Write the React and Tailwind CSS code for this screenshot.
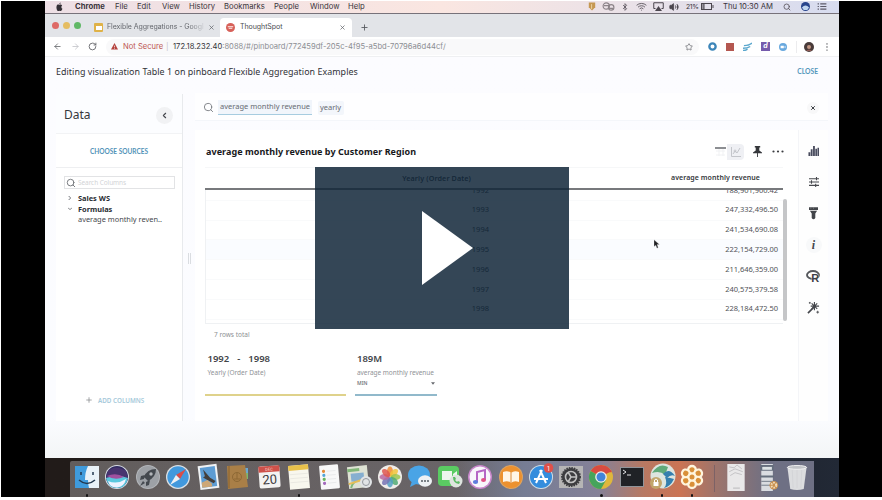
import React from "react";
import { Search, ChevronLeft, Bluetooth, Wifi, Airplay, Volume2, RotateCw, ArrowLeft, ArrowRight, Star, X, Plus } from "lucide-react";

const menus = [
  ["Chrome", "w-[40px] font-bold"],
  ["File", "w-[22px]"],
  ["Edit", "w-[25px]"],
  ["View", "w-[27px]"],
  ["History", "w-[35px]"],
  ["Bookmarks", "w-[50px]"],
  ["People", "w-[36px]"],
  ["Window", "w-[38px]"],
  ["Help", "w-[30px]"],
];

const rows = [
  ["1992", "188,901,900.42"],
  ["1993", "247,332,496.50"],
  ["1994", "241,534,690.08"],
  ["1995", "222,154,729.00"],
  ["1996", "211,646,359.00"],
  ["1997", "240,575,379.58"],
  ["1998", "228,184,472.50"],
];

function MenuBar() {
  return (
    <div className="flex h-[13px] shrink-0 items-center border-b border-[#77727a] bg-linear-to-r from-[#eddfe5] via-[#fae6e1] to-[#d7dcef] text-[7.700px] text-[#39343b]">
      <svg viewBox="0 0 24 24" className="mb-[2px] ml-[11px] mr-[12px] h-[9px] w-[7px] shrink-0" preserveAspectRatio="none" fill="#332f35">
        <path d="M16 1c0 3-2 5-4.500 5C11.500 3 13.500 1.500 16 1zM21 9c-4 2-3 7 1 9-1 3-3.500 6-5.500 6s-2.500-1-4.500-1-2.500 1-4.500 1C4 24 0 16 2 11c2-5 6-5 9.500-3C15 6 19 6.500 21 9z" />
      </svg>
      {menus.map(([t, c]) => (
        <span key={t} className={"shrink-0 whitespace-nowrap " + c}>{t}</span>
      ))}
      <div className="ml-auto flex shrink-0 items-center">
        <svg viewBox="0 0 10 10" className="mr-[6px] h-[9px] w-[8px]"><path d="M1 0h8v6L5 10 1 6z" fill="#c69852" /><path d="M4.500 2v6" stroke="#f4e0b8" /></svg>
        <svg viewBox="0 0 14 10" className="mr-[6px] h-[9px] w-[13px]" fill="none" stroke="#8c8489" strokeWidth="1.300"><circle cx="4.500" cy="4.500" r="3.500" /><circle cx="10" cy="6" r="3" /><path d="M2 4h6M6 7h6" /></svg>
        <Bluetooth className="mr-[7px] h-[10px] w-[8px]" color="#5c565e" strokeWidth={2.5} />
        <Wifi className="mr-[6px] h-[11px] w-[11px]" color="#5c565e" strokeWidth={2} />
        <svg viewBox="0 0 22 18" className="mr-[5px] h-[9px] w-[11px]"><path d="M5 13H1.500V1.500h19V13H17" fill="none" stroke="#4b464e" strokeWidth="2" /><path d="M11 8l7 10H4z" fill="#4b464e" /></svg>
        <Volume2 className="mr-[7px] h-[10px] w-[10px]" color="#4b464e" fill="#4b464e" strokeWidth={2} />
        <span className="w-[15px] text-[6.800px] tracking-[-0.3px]">21%</span>
        <svg viewBox="0 0 13 7" className="mr-[9px] h-[7px] w-[13px]" fill="none" stroke="#4b464e"><rect x="0.500" y="0.500" width="10" height="6" /><path d="M2 1v5M3 1v5" /><path d="M12 2v3" /></svg>
        <span className="w-[60px] whitespace-nowrap text-[7.700px] tracking-[-0.050px]">Thu 10:30 AM</span>
        <Search className="mr-[10px] h-[8px] w-[8px]" color="#5c565e" strokeWidth={2.5} />
        <svg viewBox="0 0 10 10" className="mr-[7px] h-[9px] w-[9px]"><circle cx="5" cy="5" r="5" fill="#28458c" /><path d="M1 6q4-4 8 0l-2 3H3z" fill="#bfd5ef" /></svg>
        <svg viewBox="0 0 10 8" className="mr-[12px] h-[7px] w-[10px]" stroke="#5c5b69" strokeWidth="1.300"><path d="M0 1h1.500M3 1h7M0 4h1.500M3 4h7M0 7h1.500M3 7h7" /></svg>
      </div>
    </div>
  );
}

function TabStrip() {
  return (
    <div className="flex h-[23px] shrink-0 items-end bg-[#e2e4e8]">
      <div className="flex h-[23px] w-[49px] shrink-0 items-center gap-[4px] pl-[7px]">
        <i className="size-[7px] rounded-full bg-[#de6a67]" />
        <i className="size-[7px] rounded-full bg-[#e5bd62]" />
        <i className="size-[7px] rounded-full bg-[#60b866]" />
      </div>
      <div className="flex h-[19px] w-[126px] shrink-0 items-center text-[7px] text-[#62656a]">
        <span className="flex size-[9px] shrink-0 items-center justify-center rounded-[1px] bg-[#dfb248]"><i className="h-[4px] w-[6px] bg-white" /></span>
        <span className="ml-[4px] w-[97px] overflow-hidden whitespace-nowrap bg-linear-to-r from-[#5d6066] from-85% to-[#d2d4d8] bg-clip-text tracking-[-0.060px] text-transparent">Flexible Aggregations - Google</span>
        <X className="ml-[4px] size-[7px] shrink-0" color="#62656a" strokeWidth={2.5} />
      </div>
      <div className="flex h-[19px] w-[132px] shrink-0 items-center rounded-t-[4px] bg-white pl-[6px] text-[7px] text-[#4a4c50]">
        <svg viewBox="0 0 10 10" className="size-[9px]"><circle cx="5" cy="5" r="5" fill="#d76159" /><path d="M2 4h6M3 6h4" stroke="#f5cfca" strokeWidth="1.200" /></svg>
        <span className="ml-[5px] tracking-[-0.050px]">ThoughtSpot</span>
        <X className="ml-auto mr-[6px] size-[7px]" color="#62656a" strokeWidth={2.500} />
      </div>
      <Plus className="mb-[5px] ml-[8px] size-[9px]" color="#55585d" strokeWidth={2.300} />
    </div>
  );
}

function Toolbar() {
  return (
    <div className="flex h-[20px] shrink-0 items-center border-b border-[#eff0f2] bg-white pl-[8px] text-[7.600px]">
      <ArrowLeft className="size-[9px]" color="#66686c" strokeWidth={2.200} />
      <ArrowRight className="ml-[9px] size-[9px]" color="#c2c4c8" strokeWidth={2.200} />
      <RotateCw className="ml-[8px] size-[9px]" color="#66686c" strokeWidth={2.400} />
      <div className="ml-[9px] flex h-[16px] w-[593px] shrink-0 items-center rounded-full bg-[#f9f9fa] pl-[5px]">
        <svg viewBox="0 0 8 8" className="size-[7px]"><path d="M4 0l4 7.500H0z" fill="#b4413c" /><path d="M4 3v2M4 5.700v.8" stroke="#fff" strokeWidth=".8" /></svg>
        <span className="ml-[5px] w-[43px] whitespace-nowrap text-[#bd5752]">Not Secure</span>
        <span className="w-[7px] text-[#c4c4c8]">|</span>
        <span className="whitespace-nowrap text-[#333438]">172.18.232.40</span>
        <span className="whitespace-nowrap text-[#8c8e93]">:8088/#/pinboard/772459df-205c-4f95-a5bd-70796a6d44cf/</span>
        <Star className="ml-auto mr-[6px] size-[8px] shrink-0" color="#5c5e63" strokeWidth={2} />
      </div>
      <div className="ml-[9px] flex items-center">
        <svg viewBox="0 0 10 10" className="size-[9px]"><circle cx="5" cy="5" r="3.500" fill="#fff" stroke="#3d86b9" strokeWidth="2.600" /></svg>
        <i className="ml-[9px] size-[8px] bg-[#b45750]" />
        <svg viewBox="0 0 10 10" className="ml-[9px] size-[9px]" fill="none" stroke="#5aa7cd" strokeWidth="1.600"><path d="M1 4q6 0 9-3M0 7q5 0 8-2M0 9.500q3 0 5-1.500" /></svg>
        <span className="ml-[9px] flex size-[9px] items-center justify-center bg-[#755bac] text-[7px] font-bold italic text-white">d</span>
        <svg viewBox="0 0 10 10" className="ml-[9px] size-[8px]"><circle cx="5" cy="5" r="5" fill="#68a8de" /><path d="M2 3.500h4v3H2zM6.500 5L8 3.500v3z" fill="#fff" /></svg>
        <i className="ml-[9px] h-[12px] w-px bg-[#ececee]" />
        <svg viewBox="0 0 10 10" className="ml-[7px] size-[10px]"><circle cx="5" cy="5" r="5" fill="#493b3a" /><circle cx="5" cy="5" r="2" fill="#c29784" /><path d="M2 9q3-3 6 0" fill="#915b55" /></svg>
        <svg viewBox="0 0 2 9" className="ml-[12px] h-[8px] w-[2px]" fill="#4d4f53"><circle cx="1" cy="1" r="0.800" /><circle cx="1" cy="4.500" r="0.800" /><circle cx="1" cy="8" r="0.800" /></svg>
      </div>
    </div>
  );
}

function Sidebar() {
  return (
    <aside className="flex h-[327px] w-[127px] shrink-0 flex-col border-r border-[#e8eaed] bg-white">
      <div className="flex h-[40px] shrink-0 items-center justify-between border-b border-[#f2f3f5] bg-[#fcfdff] pl-[8px] pr-[9px] pt-[3px]">
        <span className="text-[12px] text-[#36383c]">Data</span>
        <span className="flex size-[17px] items-center justify-center rounded-full bg-[#f1f2f4]"><ChevronLeft className="size-[9px]" color="#44474d" strokeWidth={3} /></span>
      </div>
      <div className="flex h-[34px] shrink-0 items-center justify-center border-b border-[#eeeff1] pt-[2px] font-[Lato] text-[6.500px] font-bold text-[#5293b8]">CHOOSE SOURCES</div>
      <div className="ml-[8px] mt-[8px] flex h-[13px] w-[111px] shrink-0 items-center border border-[#e2e3e5] pl-[1px] text-[6.500px] text-[#d2d3d6]">
        <Search className="size-[10px]" color="#74777b" strokeWidth={2.300} />
        <span className="ml-[2px] tracking-[-0.080px]">Search Columns</span>
      </div>
      <div className="mt-[4px] text-[7.400px] leading-[10.700px] text-[#46494d]">
        <div className="flex items-center pl-[12px]"><svg viewBox="0 0 6 6" className="mr-[6px] h-[4px] w-[4px]"><path d="M1 0l3 3-3 3" fill="none" stroke="#77797e" strokeWidth="1.500" /></svg><b className="text-[#292c30]">Sales WS</b></div>
        <div className="flex items-center pl-[12px]"><svg viewBox="0 0 6 6" className="mr-[6px] h-[4px] w-[4px]"><path d="M0 1l3 3 3-3" fill="none" stroke="#77797e" strokeWidth="1.500" /></svg><b className="text-[#292c30]">Formulas</b></div>
        <div className="whitespace-nowrap pl-[22px]">average monthly reven..</div>
      </div>
      <div className="mb-[16px] mt-auto flex items-center pl-[29px] text-[6.300px] font-semibold text-[#a5c9da]">
        <Plus className="mr-[5px] size-[8px]" color="#888b8f" strokeWidth={2.300} />ADD COLUMNS
      </div>
    </aside>
  );
}

function DataTable() {
  return (
    <div className="ml-[10px] mt-[5px] w-[583px]">
      <div className="flex h-[23px] w-[578px] items-center border-b-2 border-t border-b-[#77797c] border-t-[#f6f7f8] text-[7px] font-semibold text-[#35383c]">
        <span className="w-[266px] whitespace-nowrap text-right text-[7.200px] tracking-[0.100px]">Yearly (Order Date)</span>
        <span className="w-[289px] whitespace-nowrap text-right tracking-[0.060px]">average monthly revenue</span>
      </div>
      <div className="flex h-[134px]">
        <div className="flex h-[134px] w-[578px] shrink-0 flex-col justify-end overflow-hidden border-b border-l border-[#eff1f3] pb-[3.500px]">
          {rows.map(([y, v], i) => (
            <div key={y} className={"flex h-[19.800px] shrink-0 items-center border-b border-[#f9fafb] text-[7.500px] text-[#505357] " + (i === 3 ? "bg-[#fafcff]" : "")}>
              <span className="w-[283px] text-right text-[#303236]">{y}</span>
              <span className="w-[289px] text-right tracking-[-0.040px]">{v}</span>
            </div>
          ))}
        </div>
        <div className="mt-[9px] h-[122px] w-[4px] rounded-full bg-[#c5c6c8]" />
      </div>
    </div>
  );
}

function Rail() {
  return (
    <div className="flex w-[30px] shrink-0 flex-col items-center border-l border-[#f4f5f8] bg-[#fefefe] pt-[15px]">
      <svg viewBox="0 0 12 12" className="size-[11px]" fill="#484b5d"><path d="M.5 8h2v4h-2zM3 4.500h2V12H3zM5.500 1h2v11h-2zM8 4h1.800v8H8zM10.300 3H12v9h-1.700z" /></svg>
      <svg viewBox="0 0 12 12" className="mt-[21px] size-[10px]" fill="none" stroke="#47494e" strokeWidth="1.300"><path d="M0 2h12M0 6h12M0 10h12M9 0v4M3 4v4M8 8v4" /></svg>
      <svg viewBox="0 0 10 14" className="mt-[20px] h-[13px] w-[9px]" fill="#424449"><path d="M0 0h10v3H0zM1 4h8L7 7v5q-2 3-4 0V7z" /><path d="M2 0v2M5 0v2" stroke="#999" strokeWidth=".5" /></svg>
      <span className="mt-[17px] flex size-[16px] items-center justify-center rounded-full bg-[#f8f9fa] font-[Liberation_Serif] text-[12px] font-bold italic leading-none text-[#44464b]">i</span>
      <svg viewBox="0 0 15 12" className="mt-[17px] h-[12px] w-[15px]"><ellipse cx="7" cy="5" rx="6" ry="4" fill="none" stroke="#55585c" strokeWidth="1.900" /><text x="5.200" y="11.500" fontSize="11" fontWeight="700" fontFamily="Liberation Sans, sans-serif" fill="#3e4146" stroke="#fff" strokeWidth=".7" paintOrder="stroke">R</text></svg>
      <svg viewBox="0 0 14 14" className="mt-[19px] size-[13px]" fill="none" stroke="#44464b"><path d="M1 13L8 6" strokeWidth="1.700" /><path d="M8 1v9M4 5.500h9M5 2.500l6 6M11 2.500l-6 6" strokeWidth="1.200" /><path d="M2 2h2M3 1v2M10 12h3M11.500 10.500v3" strokeWidth=".9" /></svg>
    </div>
  );
}

function Answer() {
  return (
    <section className="flex w-[603px] shrink-0 flex-col bg-white">
      <div className="ml-[11px] mt-[11px] flex h-[21px] shrink-0 items-center">
        <span className="whitespace-nowrap text-[9px] font-bold tracking-[0.050px] text-[#17181b]">average monthly revenue by Customer Region</span>
        <svg viewBox="0 0 11 10" className="ml-auto h-[10px] w-[11px]"><path d="M0 1h11" stroke="#66696e" strokeWidth="1.500" /><path d="M1 4h9M1 8h9M4 2v7M8 2v7" stroke="#f0f1f3" /></svg>
        <span className="ml-[1px] flex h-[16px] w-[17px] items-center justify-center rounded-r-[4px] bg-[#eff0f4]"><svg viewBox="0 0 10 10" className="size-[10px]" fill="none" stroke="#c3c5ca"><path d="M.5 0v9.500H10M2 7l2-3 2 2 3-5" /><circle cx="4" cy="4" r="1" /></svg></span>
        <svg viewBox="0 0 10 12" className="ml-[9px] h-[11px] w-[9px]" fill="#35373b"><path d="M2 0h6v1.500H7V5l3 2v1H0V7l3-2V1.500H2z" /><path d="M4.500 7h1v5h-1z" /></svg>
        <svg viewBox="0 0 12 3" className="ml-[10px] mr-[14px] h-[3px] w-[12px]" fill="#3c3e42"><circle cx="1.500" cy="1.500" r="1.100" /><circle cx="6" cy="1.500" r="1.100" /><circle cx="10.500" cy="1.500" r="1.100" /></svg>
      </div>
      <DataTable />
      <div className="ml-[19px] mt-[6px] text-[6.500px] leading-[10px] text-[#8c8f93]">7 rows total</div>
      <div className="ml-[10px] mt-[12px] flex gap-[9px]">
        <div className="h-[44px] w-[141px] border-b-2 border-[#dfd28b] pl-[2.500px]">
          <div className="flex text-[9.500px] font-semibold leading-[14px] text-[#424448]"><span>1992</span><span className="mx-[8px]">-</span><span>1998</span></div>
          <div className="text-[6.500px] leading-[13px] text-[#909397]">Yearly (Order Date)</div>
        </div>
        <div className="h-[44px] w-[82px] border-b-2 border-[#91b9cb] pl-[2px] pr-[2px]">
          <div className="text-[9.500px] font-semibold leading-[14px] text-[#424448]">189M</div>
          <div className="whitespace-nowrap text-[6.500px] leading-[13px] tracking-[-0.050px] text-[#909397]">average monthly revenue</div>
          <div className="flex items-center justify-between text-[5px] font-semibold leading-[9px] text-[#77797e]">MIN<svg viewBox="0 0 6 4" className="h-[3px] w-[4px]"><path d="M0 0h6L3 4z" fill="#66696e" /></svg></div>
        </div>
      </div>
    </section>
  );
}

function Page() {
  return (
    <main className="flex h-[401px] shrink-0 flex-col bg-linear-to-b from-[#fcfcff] via-[#fbfcff] via-90% to-[#f3f5f6]">
      <header className="flex h-[28px] shrink-0 items-center justify-between pl-[11px] pr-[21px] pt-[1px]">
        <h1 className="whitespace-nowrap text-[8.900px] tracking-[0.050px] text-[#303236]">Editing visualization Table 1 on pinboard Flexible Aggregation Examples</h1>
        <span className="font-[Lato] text-[6.700px] font-bold text-[#5297bb]">CLOSE</span>
      </header>
      <div className="ml-[11px] mt-[8px] flex h-[328px] shrink-0">
        <div className="flex h-[328px] items-end"><Sidebar /></div>
        <div className="flex w-[12px] shrink-0 items-center justify-center pt-[3px]"><i className="h-[11px] w-[3px] border-x border-[#dadde1]" /></div>
        <div className="flex w-[633px] shrink-0 flex-col">
          <div className="flex h-[28px] shrink-0 items-center border-b border-[#f4f6fa] bg-[#fefeff] pl-[8px] pt-[2px] text-[7.500px] text-[#676b72]">
            <Search className="size-[11px]" color="#7a7d82" strokeWidth={2} />
            <span className="ml-[4px] flex h-[15px] w-[94px] items-center whitespace-nowrap border-b border-[#a7cce0] bg-[#f1f5fb] pl-[2px]">average monthly revenue</span>
            <span className="ml-[6px] flex h-[14px] w-[26px] items-center rounded-[2px] bg-[#f3f6fb] pl-[2px]">yearly</span>
            <span className="ml-auto mr-[9px] flex size-[12px] items-center justify-center rounded-full bg-[#f8f8f9]"><X className="size-[6px]" color="#3d4045" strokeWidth={4} /></span>
          </div>
          <div className="mt-[9px] flex h-[291px] shrink-0">
            <Answer />
            <Rail />
          </div>
        </div>
      </div>
    </main>
  );
}

const petals = ["#ef8a35", "#f2c43b", "#9dc550", "#52ab75", "#529fc3", "#7774b5", "#b868a1", "#df5750"];

const icons = [
  <><path d="M0 1h24v22H0z" fill="#3f9bdc" /><path d="M13 1h11v22H14q-1-4-1-8h-3q0-8 3-14z" fill="#e9f2f8" /><path d="M6 7v3M18 7v3M4 15q8 7 16 0" fill="none" stroke="#23394f" strokeWidth="1.500" /></>,
  <><circle cx="12" cy="12" r="12" fill="#d8dde5" /><circle cx="12" cy="12" r="11" fill="#302b60" /><path d="M3 6q8-7 18 0l2 7H1z" fill="#48346f" /><path d="M1 13q11-4 22 0-2 10-11 10T1 13z" fill="#5cc8de" /><path d="M3 16q9 4 18-2-2 8-9 8.500T3 16z" fill="#eef3ff" /><path d="M2 11q9-4 17 1-9 4-17-1" fill="#a0509e" /></>,
  <><circle cx="12" cy="12" r="12" fill="#b3b6ba" /><circle cx="12" cy="12" r="11" fill="#9da1a6" /><path d="M20 4q-9 0-12 8l4 4q8-4 8-12zM9 10l-4 1-1 4 4-1zM14 15l-1 5-3 1v-4zM7 16l-3 5 5-3z" fill="#44494f" /><circle cx="15" cy="9" r="1.700" fill="#b3b6ba" /></>,
  <><circle cx="12" cy="12" r="12" fill="#dce1e5" /><circle cx="12" cy="12" r="10.700" fill="#4299dd" /><path d="M20 4l-6 10-4-4z" fill="#d94e48" /><path d="M4 20l6-10 4 4z" fill="#eef1f4" /></>,
  <g transform="rotate(-7 12 12)"><path d="M3 0h19v24H3z" fill="#f0f2f4" /><path d="M5 2h15v20H5z" fill="#5d9cd3" /><path d="M8 4l6 9 5 4-2 2-6-4-4-3 2-1z" fill="#443e3b" /><path d="M5 17l6-2 4 4v3H5z" fill="#cda777" /></g>,
  <><path d="M19 3h3v5h-3z" fill="#6ba7d0" /><path d="M19 8h3v6h-3z" fill="#7fb66d" /><path d="M1 1l18-1 3 22-20 2z" fill="#a97f47" /><path d="M3 1v22" stroke="#8a632e" /><circle cx="11" cy="12" r="4.500" fill="none" stroke="#8d6835" /><path d="M11 8v6M8 14h6" stroke="#8d6835" /></>,
  <g transform="rotate(-4 12 12)"><rect x="2" y="1" width="21" height="22" rx="2" fill="#f4f3f2" /><path d="M2 1h21v6H2z" fill="#cf514a" /><text x="12.500" y="5.800" textAnchor="middle" fontSize="4" fill="#f5d1cc">DEC</text><text x="12.500" y="19" textAnchor="middle" fontSize="13" fill="#3d3b3e">20</text></g>,
  <g transform="rotate(-5 12 12)"><path d="M2 0h20v24H2z" fill="#f8f7ee" /><path d="M2 0h20v5H2z" fill="#e9c14b" /><path d="M3 9h18M3 13h18M3 17h18" stroke="#eae9e2" /></g>,
  <g transform="rotate(-5 12 12)"><rect x="3" y="0" width="19" height="24" rx="1" fill="#f8f8f8" /><circle cx="7" cy="6" r="1.600" fill="#e48b39" /><circle cx="7" cy="10" r="1.600" fill="#53a5d8" /><circle cx="7" cy="14" r="1.600" fill="#68b55e" /><circle cx="7" cy="18" r="1.600" fill="#a36abc" /><path d="M10 6h9M10 10h9M10 14h9M10 18h9" stroke="#e9eaeb" /></g>,
  <><g transform="rotate(-6 12 12)"><path d="M1 1h20v22H1z" fill="#dee2d4" /><path d="M1 3h12v3H1z" fill="#82b879" /><path d="M3 22q3-8 12-8" stroke="#82b879" strokeWidth="2" fill="none" /><path d="M4 8h13v8H4z" fill="#86afd0" /><path d="M1 18l15-3" stroke="#e6be58" strokeWidth="2" /></g><circle cx="19" cy="17" r="6" fill="#e1e4e6" /><circle cx="19" cy="17" r="3.500" fill="none" stroke="#94999e" /></>,
  <><circle cx="12" cy="12" r="12" fill="#efece9" />{petals.map((c, i) => <ellipse key={c} cx="12" cy="6.500" rx="3" ry="5" fill={c} fillOpacity=".85" transform={`rotate(${i * 45} 12 12)`} />)}</>,
  <><ellipse cx="11" cy="10" rx="11" ry="9.500" fill="#49a4e6" /><path d="M4 16l-2 6 8-4z" fill="#49a4e6" /><ellipse cx="17" cy="16" rx="7" ry="5.800" fill="#edf1f4" /><circle cx="14" cy="16" r="1" fill="#555d65" /><circle cx="17" cy="16" r="1" fill="#555d65" /><circle cx="20" cy="16" r="1" fill="#555d65" /></>,
  <><rect x="0" y="1" width="21" height="20" rx="4" fill="#5acb62" /><path d="M4 6h10v9H4zM15 9l4-3v9l-4-3z" fill="#eef6ed" /><circle cx="18" cy="16" r="6.500" fill="#dee5df" /><path d="M15 12q0 6 6 7l1-2-2-1-1 1-2-2 1-1-1-2z" fill="#5bbb64" /></>,
  <><circle cx="12" cy="12" r="12" fill="#c886cb" /><circle cx="12" cy="12" r="10.500" fill="#f8f6fb" /><path d="M9 17V7l8-2v10" fill="none" stroke="#b565c5" strokeWidth="2" /><ellipse cx="7.500" cy="17" rx="2.600" ry="2" fill="#5d7ddd" /><ellipse cx="15.500" cy="15" rx="2.500" ry="2" fill="#e05285" /></>,
  <><circle cx="12" cy="12" r="12" fill="#dda462" /><circle cx="12" cy="12" r="11" fill="#ec912f" /><path d="M4 7q5-2 8 1 3-3 8-1v10q-5-2-8 1-3-3-8-1z" fill="#fff5e6" /><path d="M12 8v10" stroke="#dc8a38" /></>,
  <><circle cx="12" cy="12" r="12" fill="#d2dfe8" /><circle cx="12" cy="12" r="11" fill="#348ddd" /><path d="M13 5L7 18M11 5l6 13M5 14h14" stroke="#fff" strokeWidth="2" fill="none" /><circle cx="19.500" cy="3" r="4.800" fill="#df504a" /><text x="19.500" y="5.500" fontSize="6.500" textAnchor="middle" fill="#fff">1</text></>,
  <><path d="M0 1h24v22H0z" fill="#b6b5b5" /><circle cx="12" cy="12" r="9" fill="#3d3d40" /><circle cx="12" cy="12" r="9" fill="none" stroke="#3d3d40" strokeWidth="2" strokeDasharray="1.500 1" /><circle cx="12" cy="12" r="5.500" fill="none" stroke="#c1c1c1" strokeWidth="1.600" /><path d="M12 12h6M12 12L9 7M12 12l-3 5" stroke="#c1c1c1" strokeWidth="1.500" /></>,
  <><circle cx="12" cy="12" r="12" fill="#dfb73c" /><path d="M12 12L1.600 6A12 12 0 0 1 22.400 6z" fill="#d84b40" /><path d="M12 12L1.600 6A12 12 0 0 0 12 24l5-9z" fill="#45a45c" /><path d="M12 6.500h10.600" stroke="#d84b40" strokeWidth="1.500" /><circle cx="12" cy="12" r="5.800" fill="#f0f0ed" /><circle cx="12" cy="12" r="4.500" fill="#4285da" /></>,
  <><path d="M0 2h24v20H0z" fill="#919499" /><path d="M1 3h22v18H1z" fill="#202226" /><path d="M3 5l3 2-3 2M7 10h4" stroke="#e2e3e5" fill="none" /></>,
  <><circle cx="13" cy="11" r="12.500" fill="#dde5df" /><path d="M2 8Q9-3 18 2l-3 8q-5-5-13-2" fill="#60aa79" /><path d="M13 9q6-7 12 2-4-2-8 2zM15 12q6 1 9 2-4 8-10 9 4-4 1-11" fill="#357fae" /><circle cx="6" cy="18" r="6" fill="#c2a66b" /><path d="M3.500 17h5v4h-5z" fill="#fff" /><path d="M4.500 17v-2q1.500-2 3 0v2" fill="none" stroke="#fff" /></>,
  <>{[0, 60, 120, 180, 240, 300].map((r) => <circle key={r} cx="12" cy="4.800" r="3.800" fill="#d99039" stroke="#fff5de" strokeWidth="2.300" transform={`rotate(${r} 12 12)`} />)}<circle cx="12" cy="12" r="3.500" fill="#d99039" stroke="#fff5de" strokeWidth="2" /></>,
];

function Dock() {
  return (
    <div className="flex h-[40px] shrink-0 items-end bg-linear-to-r from-[#211b19] from-5% via-[#111] via-50% to-[#222936]">
      <div className="ml-[25px] flex h-[37px] w-[744px] items-start rounded-t-[2px] bg-linear-to-r from-[#625d5c] via-[#696467] via-50% to-[#6e7084]">
        <div className="flex h-[37px] w-[744px] shrink-0 items-start bg-[linear-gradient(90deg,transparent_52%,#767d94_61%,#858198_71%,#b77963_77%,#cb7454_82%,#9c746c_87%,#6e7084_94%)] pl-[2px]">
          {icons.map((icon, i) => (
            <div key={i} className="flex w-[30.250px] shrink-0 flex-col items-center pt-[4px]">
              <svg viewBox="0 0 24 24" className="size-[24px] overflow-visible font-[Roboto]">{icon}</svg>
              {[0, 7, 17, 19, 20].includes(i) && <i className="mt-[5px] size-[2.500px] rounded-full bg-[#141314]" />}
            </div>
          ))}
          <i className="ml-[7px] mt-[4px] h-[27px] w-px shrink-0 bg-[#7c6266]" />
          <svg viewBox="0 0 18 28" className="ml-[12px] mt-[3px] h-[27px] w-[18px] shrink-0"><path d="M0 0h18v28H0z" fill="#e9e8e9" /><path d="M2 3l5 1 3-3 5 4M2 8l6-3 8 3M3 12l5-3 7 2" stroke="#c3c2c5" fill="none" /><path d="M6 25h7" stroke="#b8b7ba" /></svg>
          <svg viewBox="0 0 20 28" className="ml-[14px] mt-[3px] h-[27px] w-[20px] shrink-0"><path d="M2 0h12v28H2z" fill="#d9dce1" /><path d="M1 1h14v6H1zM1 12h14v2H1z" fill="#656e7d" /><path d="M3 3h10v3H3z" fill="#dce2e4" /><path d="M2 18h12M2 22h12" stroke="#727b89" /><circle cx="15" cy="22" r="4.500" fill="#ca9250" /><circle cx="15" cy="22" r="2.500" fill="none" stroke="#f2ddbd" strokeDasharray="1.500 1" strokeWidth="2" /></svg>
          <svg viewBox="0 0 22 26" className="ml-[7px] mt-[4px] h-[25px] w-[22px] shrink-0"><path d="M1 2l3 23q7 2 14 0l3-23z" fill="#dcdddf" /><path d="M6 4l1 20M11 4v20M16 4l-1 20" stroke="#d3d4d7" /><ellipse cx="11" cy="2.500" rx="10" ry="2" fill="#c2c4c8" stroke="#f1f1f2" /></svg>
        </div>
      </div>
    </div>
  );
}

export default function App() {
  return (
    <div className="relative h-[500px] w-[882px] overflow-hidden bg-white pl-px pt-px font-[Noto_Sans,sans-serif]">
      <div className="flex h-[496px] w-[881px] bg-black pl-[44px]">
        <div className="flex h-[496px] w-[794px] flex-col overflow-hidden">
          <div className="flex shrink-0 flex-col font-[Inter,sans-serif]">
            <MenuBar />
            <TabStrip />
            <Toolbar />
          </div>
          <Page />
          <Dock />
        </div>
      </div>
      <svg viewBox="0 0 10 14" className="absolute left-[654px] top-[239px] h-[10px] w-[6px]"><path d="M0 0v11l3-2 2 5 2-1-2-5h4z" fill="#202124" stroke="#d6d7d9" strokeWidth=".5" /></svg>
      <button aria-label="Play video" className="absolute left-[315px] top-[167px] flex h-[162px] w-[254px] items-start bg-[#102638]/85 pl-[107px] pt-[44px]">
        <svg viewBox="0 0 51 74" className="h-[74px] w-[51px]"><path d="M0 0v74l51-37z" fill="#fff" /></svg>
      </button>
    </div>
  );
}
